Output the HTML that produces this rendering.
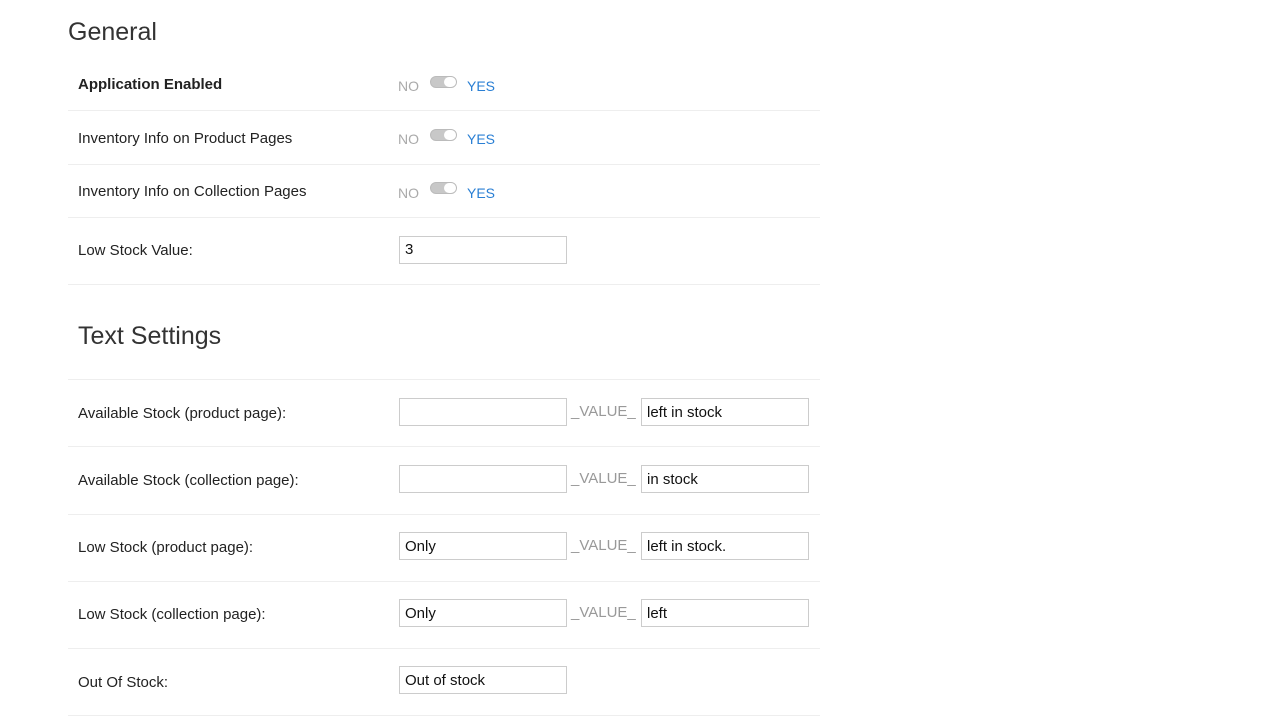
<!DOCTYPE html><html><head><style>
body{margin:0;width:1280px;height:720px;background:#fff;font-family:"Liberation Sans",sans-serif;position:relative;overflow:hidden;color:#222}
.a{position:absolute}
.h{font-size:25px;color:#333}
.l{font-size:15px;left:78px}
.line{position:absolute;left:68px;width:752px;height:1px;background:#eee}
.no{font-size:14px;color:#aaa;left:398px}
.yes{font-size:14px;color:#2a7fd4;left:467px}
.tg{position:absolute;left:430px;width:27px;height:12px;border-radius:6px;background:#c8c8c8;border:1px solid #bbb;box-sizing:border-box}
.tg:after{content:"";position:absolute;right:0;top:0;width:12px;height:10px;border-radius:5px;background:#fff;border:0}
.in{position:absolute;height:28px;width:168px;border:1px solid #ccc;box-sizing:border-box;font-size:15px;padding:5px 5px;color:#111}
.v{font-size:15px;color:#999;left:571px}
</style></head><body>
<div class="a h" style="left:68px;top:18px">General</div>
<div class="a l" style="top:76px;font-weight:bold">Application Enabled</div>
<div class="a no" style="top:78px">NO</div><div class="tg" style="top:76px"></div><div class="a yes" style="top:78px">YES</div>
<div class="line" style="top:110px"></div>
<div class="a l" style="top:130px">Inventory Info on Product Pages</div>
<div class="a no" style="top:131px">NO</div><div class="tg" style="top:129px"></div><div class="a yes" style="top:131px">YES</div>
<div class="line" style="top:164px"></div>
<div class="a l" style="top:183px">Inventory Info on Collection Pages</div>
<div class="a no" style="top:185px">NO</div><div class="tg" style="top:182px"></div><div class="a yes" style="top:185px">YES</div>
<div class="line" style="top:217px"></div>
<div class="a l" style="top:242px">Low Stock Value:</div>
<div class="in" style="left:399px;top:236px;padding-top:4px">3</div>
<div class="line" style="top:284px"></div>
<div class="a h" style="left:78px;top:322px">Text Settings</div>
<div class="line" style="top:379px"></div>
<div class="a l" style="top:405px">Available Stock (product page):</div>
<div class="in" style="left:399px;top:398px"></div><div class="a v" style="top:403px">_VALUE_</div><div class="in" style="left:641px;top:398px">left in stock</div>
<div class="line" style="top:446px"></div>
<div class="a l" style="top:472px">Available Stock (collection page):</div>
<div class="in" style="left:399px;top:465px"></div><div class="a v" style="top:470px">_VALUE_</div><div class="in" style="left:641px;top:465px">in stock</div>
<div class="line" style="top:514px"></div>
<div class="a l" style="top:539px">Low Stock (product page):</div>
<div class="in" style="left:399px;top:532px">Only</div><div class="a v" style="top:537px">_VALUE_</div><div class="in" style="left:641px;top:532px">left in stock.</div>
<div class="line" style="top:581px"></div>
<div class="a l" style="top:606px">Low Stock (collection page):</div>
<div class="in" style="left:399px;top:599px">Only</div><div class="a v" style="top:604px">_VALUE_</div><div class="in" style="left:641px;top:599px">left</div>
<div class="line" style="top:648px"></div>
<div class="a l" style="top:674px">Out Of Stock:</div>
<div class="in" style="left:399px;top:666px">Out of stock</div>
<div class="line" style="top:715px"></div>
</body></html>
